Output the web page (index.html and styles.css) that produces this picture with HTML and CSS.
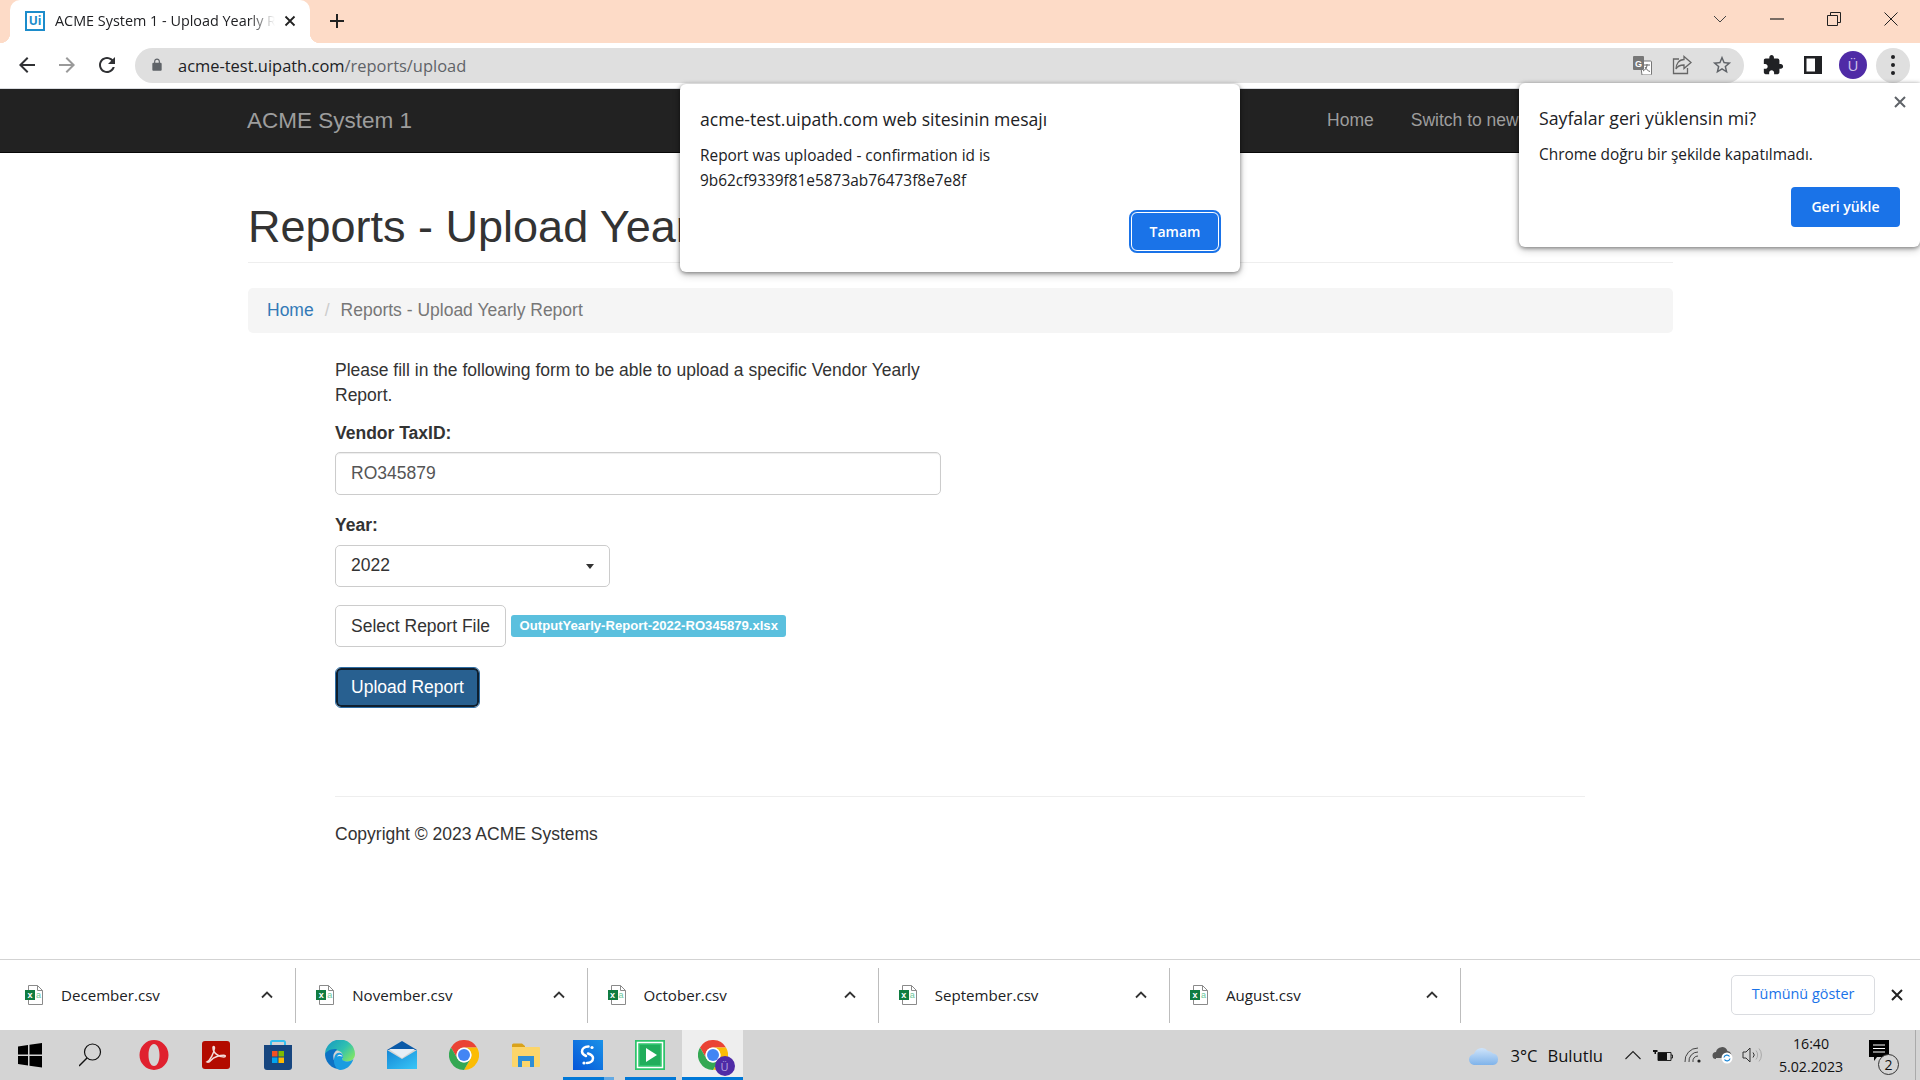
FILE: index.html
```html
<!DOCTYPE html>
<html>
<head>
  <meta charset="utf-8">
  <title>ACME System 1 - Upload Yearly Report</title>
  <link rel="stylesheet" href="styles.css">
</head>
<body>
  <svg class="defs" width="0" height="0">
    <symbol id="chrome" viewBox="0 0 30 30">
      <path d="M2 7.5A15 15 0 0 1 28 7.5H15A7.5 7.5 0 0 0 8.5 18.75Z" fill="#ea4335"/>
      <path d="M28 7.5A15 15 0 0 1 15 30L21.5 18.75A7.5 7.5 0 0 0 15 7.5Z" fill="#fbbc04"/>
      <path d="M15 30A15 15 0 0 1 2 7.5L8.5 18.75A7.5 7.5 0 0 0 21.5 18.75Z" fill="#34a853"/>
      <circle cx="15" cy="15" r="7.5" fill="#fff"/>
      <circle cx="15" cy="15" r="6" fill="#4285f4"/>
    </symbol>
    <symbol id="xl-page" viewBox="0 0 18 20">
      <path d="M3.5 .5h9l5 5v14h-14z" fill="#fff" stroke="#8a8a8a"/>
      <path d="M12.5 .5v5h5" fill="none" stroke="#8a8a8a"/>
      <rect x="0" y="5" width="10" height="10" fill="#107c41"/>
    </symbol>
    <symbol id="chev-up" viewBox="0 0 12 8">
      <path d="M1 6.5l5-5 5 5" stroke="#333" stroke-width="1.8" fill="none"/>
    </symbol>
  </svg>

  <div class="window">
    <div class="tabstrip">
      <div class="tab">
        <span class="favicon">Ui</span>
        <span class="tab-title">ACME System 1 - Upload Yearly Report</span>
        <svg class="tab-close" viewBox="0 0 12 12"><path d="M1.5 1.5l9 9M10.5 1.5l-9 9" stroke="#222" stroke-width="1.8" fill="none"/></svg>
      </div>
      <svg class="new-tab" viewBox="0 0 16 16"><path d="M8 1v14M1 8h14" stroke="#222" stroke-width="2" fill="none"/></svg>
      <div class="win-controls">
        <div class="win-btn"><svg width="14" height="8" viewBox="0 0 14 8"><path d="M1 1l6 6 6-6" stroke="#444" fill="none"/></svg></div>
        <div class="win-btn"><svg width="14" height="2" viewBox="0 0 14 2"><path d="M0 1h14" stroke="#222" stroke-width="1.2"/></svg></div>
        <div class="win-btn"><svg width="14" height="14" viewBox="0 0 14 14"><path d="M.5 3.5h10v10H.5zM3.5 3.5v-3h10v10h-3" stroke="#222" fill="none"/></svg></div>
        <div class="win-btn"><svg width="14" height="14" viewBox="0 0 14 14"><path d="M.5.5l13 13M13.5.5l-13 13" stroke="#222" fill="none"/></svg></div>
      </div>
    </div>

    <div class="toolbar">
      <div class="tool"><svg width="24" height="24" viewBox="0 0 24 24"><path d="M20 11H7.83l5.59-5.59L12 4l-8 8 8 8 1.41-1.41L7.83 13H20v-2z" fill="#303134"/></svg></div>
      <div class="tool"><svg width="24" height="24" viewBox="0 0 24 24"><path d="M4 11h12.17l-5.59-5.59L12 4l8 8-8 8-1.41-1.41L16.17 13H4v-2z" fill="#9a9a9a"/></svg></div>
      <div class="tool"><svg width="24" height="24" viewBox="0 0 24 24"><path d="M17.65 6.35C16.2 4.9 14.21 4 12 4c-4.42 0-7.99 3.58-7.99 8s3.57 8 7.99 8c3.73 0 6.84-2.55 7.73-6h-2.08c-.82 2.33-3.04 4-5.65 4-3.31 0-6-2.69-6-6s2.69-6 6-6c1.66 0 3.14.69 4.22 1.78L13 11h7V4l-2.35 2.35z" fill="#303134"/></svg></div>
      <div class="omnibox">
        <svg class="lock" width="14" height="16" viewBox="0 0 24 24"><path d="M18 8h-1V6c0-2.76-2.24-5-5-5S7 3.24 7 6v2H6c-1.1 0-2 .9-2 2v10c0 1.1.9 2 2 2h12c1.1 0 2-.9 2-2V10c0-1.1-.9-2-2-2zM9 8V6c0-1.66 1.34-3 3-3s3 1.34 3 3v2H9z" fill="#5f6368"/></svg>
        <span class="url"><b>acme-test.uipath.com</b>/reports/upload</span>
        <div class="omni-icons">
          <div class="tool"><svg width="20" height="20" viewBox="0 0 20 20"><path d="M8 6h10.500a1 1 0 0 1 1 1v12a1 1 0 0 1-1 1H10z" fill="#fff" stroke="#777"/><rect x="1" y="1" width="11" height="14" rx="1" fill="#777"/><text x="6.5" y="12" text-anchor="middle" class="tr-g">G</text><path d="M12 10h6M15 9v1c0 3-2 5-4 6M13 12c1 2 3 4 5 4.500" stroke="#666" fill="none"/></svg></div>
          <div class="tool"><svg width="20" height="20" viewBox="0 0 20 20"><path d="M7 4H1.500v14.500h14V13" stroke="#666" stroke-width="1.3" fill="none"/><path d="M12 1.500l7 6-7 6v-3.500c-4 0-6.500 1-8 4 0-5 3-9.500 8-9.500z" stroke="#666" stroke-width="1.3" fill="#e0e0e0"/></svg></div>
          <div class="tool"><svg width="22" height="22" viewBox="0 0 24 24"><path d="M22 9.24l-7.19-.62L12 2 9.19 8.63 2 9.24l5.46 4.73L5.82 21 12 17.27 18.18 21l-1.63-7.03L22 9.24zM12 15.4l-3.76 2.27 1-4.28-3.32-2.88 4.38-.38L12 6.1l1.71 4.04 4.38.38-3.32 2.88 1 4.28L12 15.4z" fill="#5f6368"/></svg></div>
        </div>
      </div>
      <div class="tool"><svg width="22" height="22" viewBox="0 0 24 24"><path d="M20.5 11H19V7c0-1.1-.9-2-2-2h-4V3.5C13 2.12 11.88 1 10.5 1S8 2.12 8 3.5V5H4c-1.1 0-1.99.9-1.99 2v3.8H3.5c1.49 0 2.7 1.21 2.7 2.7s-1.21 2.7-2.7 2.7H2V20c0 1.1.9 2 2 2h3.8v-1.5c0-1.49 1.21-2.7 2.7-2.7 1.49 0 2.7 1.21 2.7 2.7V22H17c1.1 0 2-.9 2-2v-4h1.5c1.38 0 2.5-1.12 2.5-2.5S21.88 11 20.5 11z" fill="#202124"/></svg></div>
      <div class="tool"><svg width="18" height="18" viewBox="0 0 18 18"><path d="M0 0h18v18H0zM2.500 2.500v13h8.500v-13z" fill="#202124" fill-rule="evenodd"/></svg></div>
      <div class="tool"><div class="avatar">Ü</div></div>
      <div class="tool"><div class="kebab"><i></i><i></i><i></i></div></div>
    </div>

    <main class="viewport">
      <nav class="navbar">
        <a class="brand">ACME System 1</a>
        <a class="nav-link nav-home">Home</a>
        <a class="nav-link">Switch to new</a>
      </nav>
      <div class="container">
        <h1 class="page-title">Reports - Upload Yearly Report</h1>
        <div class="breadcrumb">
          <a>Home</a><span class="crumb-sep">/</span><span class="crumb-active">Reports - Upload Yearly Report</span>
        </div>
        <div class="form-col">
          <p class="intro">Please fill in the following form to be able to upload a specific Vendor Yearly Report.</p>
          <label class="field-label">Vendor TaxID:</label>
          <div class="input">RO345879</div>
          <label class="field-label year-label">Year:</label>
          <div class="select">2022<span class="caret"></span></div>
          <div class="file-row">
            <button class="btn">Select Report File</button>
            <span class="badge">OutputYearly-Report-2022-RO345879.xlsx</span>
          </div>
          <button class="btn btn-upload">Upload Report</button>
        </div>
        <footer class="footer">Copyright © 2023 ACME Systems</footer>
      </div>
    </main>

    <div class="downloads">
      <div class="dl-item">
        <span class="dl-icon"><svg width="18" height="20"><use href="#xl-page"/></svg><b>x</b><i>a</i></span>
        <span class="dl-name">December.csv</span>
        <svg class="dl-chev"><use href="#chev-up"/></svg>
      </div>
      <div class="dl-item">
        <span class="dl-icon"><svg width="18" height="20"><use href="#xl-page"/></svg><b>x</b><i>a</i></span>
        <span class="dl-name">November.csv</span>
        <svg class="dl-chev"><use href="#chev-up"/></svg>
      </div>
      <div class="dl-item">
        <span class="dl-icon"><svg width="18" height="20"><use href="#xl-page"/></svg><b>x</b><i>a</i></span>
        <span class="dl-name">October.csv</span>
        <svg class="dl-chev"><use href="#chev-up"/></svg>
      </div>
      <div class="dl-item">
        <span class="dl-icon"><svg width="18" height="20"><use href="#xl-page"/></svg><b>x</b><i>a</i></span>
        <span class="dl-name">September.csv</span>
        <svg class="dl-chev"><use href="#chev-up"/></svg>
      </div>
      <div class="dl-item">
        <span class="dl-icon"><svg width="18" height="20"><use href="#xl-page"/></svg><b>x</b><i>a</i></span>
        <span class="dl-name">August.csv</span>
        <svg class="dl-chev"><use href="#chev-up"/></svg>
      </div>
      <button class="show-all">Tümünü göster</button>
      <svg class="dl-close" viewBox="0 0 12 12"><path d="M1 1l10 10M11 1L1 11" stroke="#222" stroke-width="2" fill="none"/></svg>
    </div>

    <div class="taskbar">
      <div class="slot"><svg width="26" height="26" viewBox="0 0 26 26"><path d="M1 4.500l10-1.500v9.500H1zM12.500 2.800L25 1v11.500H12.500zM1 14h10v9.500L1 22zM12.500 14H25v11.500l-12.500-1.800z" fill="#000"/></svg></div>
      <div class="slot"><svg width="26" height="26" viewBox="2 0 26 26"><circle cx="15.5" cy="10" r="8" fill="none" stroke="#111" stroke-width="1.2"/><path d="M10 16l-8 8" stroke="#111" stroke-width="1.4"/></svg></div>
      <div class="slot"><svg width="30" height="30" viewBox="0 0 30 30"><path d="M15 0a14.500 15 0 1 0 0 30a14.500 15 0 1 0 0-30zM15 4c3.500 0 5.500 5 5.500 11s-2 11-5.500 11s-5.500-5-5.500-11s2-11 5.500-11z" fill="#e0212f" fill-rule="evenodd"/></svg></div>
      <div class="slot"><svg width="28" height="28" viewBox="0 0 28 28"><rect width="28" height="28" rx="3" fill="#b30b00"/><path d="M5 21c3-1.500 7-9 7.500-14 .1-1.800-1.500-2-1.500-.3C11 12 17 16 22 16c1.800 0 1.800-1.800 0-1.800-4 0-10.500 1.800-13 5-1 1.200-3 2.500-4 1.800z" fill="none" stroke="#f4dcd9" stroke-width="1.5"/></svg></div>
      <div class="slot"><svg width="30" height="30" viewBox="0 0 30 30"><path d="M8 6V2.500A1.500 1.500 0 0 1 9.500 1h11A1.500 1.500 0 0 1 22 2.500V6" fill="none" stroke="#35c1f1" stroke-width="2"/><path d="M1 5h28v22a3 3 0 0 1-3 3H4a3 3 0 0 1-3-3z" fill="#17467f"/><rect x="9" y="11" width="5.5" height="5.5" fill="#f25022"/><rect x="15.5" y="11" width="5.5" height="5.5" fill="#7fba00"/><rect x="9" y="17.5" width="5.5" height="5.5" fill="#00a4ef"/><rect x="15.5" y="17.5" width="5.5" height="5.5" fill="#ffb900"/></svg></div>
      <div class="slot"><svg width="30" height="30" viewBox="0 0 30 30"><defs><linearGradient id="edgeTop" x1="0" y1="0" x2="1" y2=".7"><stop offset="0" stop-color="#1596c4"/><stop offset=".6" stop-color="#2fc0b0"/><stop offset="1" stop-color="#7be36a"/></linearGradient></defs><path d="M0 15A15 15 0 0 1 30 14c0 5-4 7.500-8 7.500-3 0-5-1-5-2 0-.6 1-1 1-2.800C18 13 15 10.500 11.500 10.500 5 10.500 0 14 0 15z" fill="url(#edgeTop)"/><path d="M0 15c0-3 5-6 10-6 3 0 2 1 0 3-3 3-2 10 3 14 2 1.500 5 2 7 2.300A15 15 0 0 1 0 15z" fill="#0d72c4"/><path d="M11 14c3-2.500 7-1 7 2.500 0 1 0 1.500-1 2.500 0 1.500 2.500 2.500 5 2.500 3 0 5-1 6.500-2.500C26 26 21 30 15 30c-6-1-8-11-4-16z" fill="#1a9ce0"/><path d="M12 16.500c1-2.500 5-2.500 5.500.3-2-1-4-1-5.500-.3z" fill="#e8f1f6"/></svg></div>
      <div class="slot"><svg width="30" height="30" viewBox="0 0 30 30"><defs><linearGradient id="mailBody" x1="0" y1="0" x2="1" y2="1"><stop offset="0" stop-color="#1487d6"/><stop offset="1" stop-color="#38c6f7"/></linearGradient></defs><path d="M0 10L15 1l15 9z" fill="#0a5aa8"/><path d="M0 10l15 9 15-9v19H0z" fill="url(#mailBody)"/><path d="M2 9h26l-13 9z" fill="#e7eef5"/></svg></div>
      <div class="slot"><svg width="30" height="30" viewBox="0 0 30 30"><use href="#chrome"/></svg></div>
      <div class="slot"><svg width="28" height="24" viewBox="0 0 28 24"><path d="M0 2a1.500 1.500 0 0 1 1.500-1.500H10L13 3v1H0z" fill="#d9a21b"/><path d="M0 4h27a1 1 0 0 1 1 1v18a1 1 0 0 1-1 1H1a1 1 0 0 1-1-1z" fill="#fcd56a"/><path d="M6 13h16v11h-4v-6h-8v6H6z" fill="#2f8ed6"/></svg></div>
      <div class="slot slot-open"><svg width="30" height="30" viewBox="0 0 30 30"><defs><linearGradient id="sTile" x1="0" y1="1" x2="1" y2="0"><stop offset="0" stop-color="#0555d8"/><stop offset="1" stop-color="#1a92e8"/></linearGradient></defs><rect width="30" height="30" fill="url(#sTile)"/><path d="M15.500 6.500c-4 0-6.500 2-6.500 5 0 2 1.500 3.500 4 4.500M15 13.500c3 1 5 2.500 5 4.500 0 3-2.500 5-6 5" fill="none" stroke="#fff" stroke-width="2.5" stroke-linecap="round"/><circle cx="19" cy="7.500" r="1.600" fill="#fff"/><circle cx="11" cy="23" r="1.600" fill="#fff"/></svg></div>
      <div class="slot slot-open slot-green"><svg width="30" height="30" viewBox="0 0 30 30"><rect width="30" height="30" fill="#2fc46c"/><rect x="2.5" y="2.500" width="25" height="25" fill="none" stroke="#fff" stroke-width="1.5"/><rect x="5" y="5" width="20" height="20" fill="#21ad5b"/><path d="M11 8l11 7-11 7z" fill="#fff"/></svg></div>
      <div class="slot slot-active">
        <div class="chrome-badged">
          <svg width="30" height="30" viewBox="0 0 30 30"><use href="#chrome"/></svg>
          <span class="profile-badge">Ü</span>
        </div>
      </div>
      <div class="tray">
        <svg class="tray-cloud" width="30" height="20" viewBox="0 0 30 20"><defs><linearGradient id="cloudFill" x1="0" y1="0" x2="0" y2="1"><stop offset="0" stop-color="#cfe4fa"/><stop offset="1" stop-color="#7fb3ea"/></linearGradient></defs><path d="M6 20a5.500 5.500 0 0 1-1-11A8 8 0 0 1 19 6a6.500 6.500 0 0 1 5 2.500A5.800 5.800 0 0 1 24 20z" fill="url(#cloudFill)"/></svg>
        <span class="weather"><span class="temp">3°C</span>Bulutlu</span>
        <div class="tray-icon"><svg width="16" height="10" viewBox="0 0 16 10"><path d="M.5 9L8 1.500 15.500 9" stroke="#222" fill="none" stroke-width="1.1"/></svg></div>
        <div class="tray-icon"><svg width="20" height="14" viewBox="0 0 20 14"><path d="M5 4.500h13v8H5zM18 7h1.500v3H18" fill="none" stroke="#222"/><rect x="5" y="5" width="9" height="7" fill="#111"/><path d="M1 0v2M3.500 0v2M0 2h4.500v2H3v2H1.500V4H0z" fill="#111"/></svg></div>
        <div class="tray-icon"><svg width="18" height="16" viewBox="0 0 18 16"><circle cx="15" cy="14" r="1.600" fill="#222"/><path d="M1 15A13 13 0 0 1 14 1M5 15a9 9 0 0 1 9-10M9 15a5 5 0 0 1 5-6" fill="none" stroke="#444"/></svg></div>
        <div class="tray-icon"><svg width="22" height="18" viewBox="0 0 22 18"><path d="M4 13a3.500 3.500 0 0 1 0-7A6 6 0 0 1 15.500 5 4 4 0 0 1 18 12H4z" fill="#555"/><circle cx="15" cy="12" r="5.500" fill="#fff"/><path d="M12 11.500a3 3 0 0 1 5.500-1M18 12.500a3 3 0 0 1-5.500 1" fill="none" stroke="#1a86d6" stroke-width="1.3"/></svg></div>
        <div class="tray-icon"><svg width="22" height="16" viewBox="0 0 22 16"><path d="M1 5h3l4-4v14l-4-4H1z" fill="none" stroke="#333"/><path d="M11 5.500a3.500 3.500 0 0 1 0 5" stroke="#333" fill="none"/><path d="M14 3.500a7 7 0 0 1 0 9M17 1.500a10 10 0 0 1 0 13" stroke="#a8a8a8" fill="none"/></svg></div>
        <div class="clock"><span>16:40</span><span>5.02.2023</span></div>
        <div class="notif">
          <svg width="20" height="22" viewBox="0 0 20 22"><path d="M0 0h20v17H8l-3 4v-4H0z" fill="#000"/><path d="M4 5h12M4 8.500h12M4 12h12" stroke="#fff"/></svg>
          <span class="notif-count">2</span>
        </div>
        <div class="desktop-edge"></div>
      </div>
    </div>

    <div class="dialog">
      <div class="dialog-title">acme-test.uipath.com web sitesinin mesajı</div>
      <div class="dialog-text">Report was uploaded - confirmation id is<br>9b62cf9339f81e5873ab76473f8e7e8f</div>
      <div class="dialog-actions"><button class="dialog-btn">Tamam</button></div>
    </div>

    <div class="bubble">
      <svg class="bubble-close" viewBox="0 0 12 12"><path d="M1 1l10 10M11 1L1 11" stroke="#5f6368" stroke-width="2" fill="none"/></svg>
      <div class="bubble-title">Sayfalar geri yüklensin mi?</div>
      <div class="bubble-text">Chrome doğru bir şekilde kapatılmadı.</div>
      <div class="bubble-actions"><button class="bubble-btn">Geri yükle</button></div>
    </div>
  </div>
</body>
</html>
```

FILE: styles.css
```css
html, body {
  margin: 0;
  padding: 0;
  height: 100%;
  overflow: hidden;
}
.defs {
  position: absolute;
}
.window {
  position: relative;
  display: flex;
  flex-direction: column;
  height: 100vh;
  font-family: "Open Sans", "Noto Sans", sans-serif;
  color: #202124;
  background: #fff;
}

/* browser chrome */
.tabstrip {
  display: flex;
  align-items: center;
  flex: none;
  height: 43px;
  background: #fddbc7;
}
.tab {
  position: relative;
  display: flex;
  align-items: center;
  width: 300px;
  height: 43px;
  padding-bottom: 2px;
  box-sizing: border-box;
  margin-left: 10px;
  background: #fff;
  border-radius: 10px 10px 0 0;
}
.tab::before,
.tab::after {
  content: "";
  position: absolute;
  bottom: 0;
  width: 10px;
  height: 10px;
}
.tab::before {
  left: -10px;
  background: radial-gradient(circle at 0 0, transparent 10px, #fff 10.5px);
}
.tab::after {
  right: -10px;
  background: radial-gradient(circle at 100% 0, transparent 10px, #fff 10.5px);
}
.favicon {
  flex: none;
  box-sizing: border-box;
  width: 20px;
  height: 20px;
  margin-left: 15px;
  border: 2px solid #1c8ccb;
  font: 700 12px/16px "Open Sans", sans-serif;
  text-align: center;
  color: #1c8ccb;
}
.tab-title {
  flex: 1;
  margin-left: 10px;
  overflow: hidden;
  white-space: nowrap;
  font-size: 14.4px;
  -webkit-mask-image: linear-gradient(to right, #000 88%, transparent 100%);
  mask-image: linear-gradient(to right, #000 88%, transparent 100%);
}
.tab-close {
  flex: none;
  width: 12px;
  height: 12px;
  margin: 0 14px 0 9px;
}
.new-tab {
  width: 16px;
  height: 16px;
  margin: 0 0 2px 19px;
}
.win-controls {
  display: flex;
  align-self: flex-start;
  margin: 0 1px 0 auto;
}
.win-btn {
  display: flex;
  align-items: center;
  justify-content: center;
  width: 57px;
  height: 38px;
}
.toolbar {
  display: flex;
  align-items: center;
  flex: none;
  box-sizing: border-box;
  height: 46px;
  padding: 0 0 1px 7px;
  background: #fff;
  border-bottom: 1px solid #dadce0;
}
.tool {
  display: flex;
  align-items: center;
  justify-content: center;
  flex: none;
  width: 40px;
  height: 35px;
}
.omnibox {
  display: flex;
  align-items: center;
  flex: none;
  width: 1609px;
  height: 35px;
  margin: 0 9px 0 8px;
  background: #dfdfdf;
  border-radius: 18px;
  box-sizing: border-box;
  padding-left: 15px;
}
.lock {
  flex: none;
}
.url {
  margin-left: 14px;
  font-size: 16.45px;
  color: #5f6368;
  white-space: nowrap;
}
.url b {
  font-weight: 400;
  color: #202124;
}
.omni-icons {
  display: flex;
  margin-left: auto;
  padding-right: 2px;
}
.tr-g {
  font: bold 9px "Liberation Sans", sans-serif;
  fill: #fff;
}
.avatar {
  display: flex;
  align-items: center;
  justify-content: center;
  width: 28px;
  height: 28px;
  border-radius: 50%;
  background: #4f2ba6;
  color: #cfc4ea;
  font-size: 15px;
}
.kebab {
  display: flex;
  flex-direction: column;
  align-items: center;
  justify-content: center;
  gap: 4px;
  width: 34px;
  height: 35px;
  border-radius: 50%;
  background: #dfdfdf;
}
.kebab i {
  width: 4px;
  height: 4px;
  border-radius: 50%;
  background: #202124;
}

/* page */
.viewport {
  flex: 1;
  min-height: 0;
  overflow: hidden;
  font-family: "Liberation Sans", Arial, sans-serif;
  font-size: 17.5px;
  line-height: 25px;
  color: #333;
}
.navbar {
  display: flex;
  align-items: center;
  box-sizing: border-box;
  height: 64px;
  padding-left: 247px;
  background: #222;
  border-bottom: 1px solid #080808;
  color: #9d9d9d;
  white-space: nowrap;
}
.brand {
  font-size: 22.5px;
}
.nav-home {
  margin-left: 915px;
}
.nav-link {
  margin-right: 37px;
}
.container {
  width: 1425px;
  margin-left: 248px;
}
.page-title {
  margin: 49px 0 0;
  padding-bottom: 10px;
  font-size: 45px;
  font-weight: 500;
  line-height: 50px;
  border-bottom: 1px solid #eee;
  white-space: nowrap;
}
.breadcrumb {
  height: 45px;
  margin-top: 25px;
  padding: 10px 19px;
  box-sizing: border-box;
  background: #f5f5f5;
  border-radius: 5px;
}
.breadcrumb a {
  color: #337ab7;
}
.crumb-sep {
  padding: 0 11px;
  color: #ccc;
}
.crumb-active {
  color: #777;
}
.form-col {
  width: 606px;
  margin-left: 87px;
  padding-top: 25px;
}
.intro {
  margin: 0 0 13px;
}
.field-label {
  display: block;
  margin-bottom: 6px;
  font-weight: 700;
}
.year-label {
  margin-top: 18px;
  margin-bottom: 7px;
}
.input,
.select {
  box-sizing: border-box;
  height: 43px;
  padding: 8px 15px;
  background: #fff;
  border: 1px solid #ccc;
  border-radius: 5px;
  box-shadow: inset 0 1px 1px rgba(0, 0, 0, .075);
  color: #555;
}
.select {
  position: relative;
  width: 275px;
  height: 42px;
  padding-top: 7px;
  color: #333;
  box-shadow: none;
}
.caret {
  position: absolute;
  right: 15px;
  top: 18px;
  border-top: 5px solid #333;
  border-left: 4.5px solid transparent;
  border-right: 4.5px solid transparent;
}
.file-row {
  display: flex;
  align-items: center;
  margin-top: 18px;
}
.btn {
  box-sizing: border-box;
  height: 42px;
  padding: 0 15px;
  font: inherit;
  color: #333;
  background: #fff;
  border: 1px solid #ccc;
  border-radius: 5px;
}
.badge {
  margin-left: 5px;
  padding: 0 8.5px;
  height: 22px;
  line-height: 22px;
  font-size: 13.1px;
  font-weight: 700;
  color: #fff;
  background: #5bc0de;
  border-radius: 3px;
  white-space: nowrap;
}
.btn-upload {
  display: block;
  width: 143px;
  height: 39px;
  margin: 21px 0 0 1px;
  padding: 0;
  color: #fff;
  background: #286090;
  border: 2px solid #0f1f2e;
  outline: 1px solid #2e6da4;
}
.footer {
  margin: 89px 88px 0 87px;
  padding-top: 25px;
  border-top: 1px solid #eee;
}

/* downloads shelf */
.downloads {
  display: flex;
  align-items: center;
  flex: none;
  box-sizing: border-box;
  height: 71px;
  padding-left: 5px;
  background: #fff;
  border-top: 1px solid #d3d3d3;
}
.dl-item {
  display: flex;
  align-items: center;
  flex: none;
  box-sizing: border-box;
  width: 291.25px;
  height: 55px;
  padding: 0 22px 0 20px;
  border-right: 1px solid #bdbdbd;
}
.dl-icon {
  position: relative;
  flex: none;
  width: 18px;
  height: 20px;
}
.dl-icon b,
.dl-icon i {
  position: absolute;
  top: 4px;
  font: bold 9px/12px "Liberation Sans", sans-serif;
  text-align: center;
}
.dl-icon b {
  left: 0;
  width: 10px;
  color: #fff;
}
.dl-icon i {
  left: 10px;
  width: 7px;
  font-weight: 400;
  color: #6ac79b;
}
.dl-name {
  flex: 1;
  margin-left: 18px;
  font-size: 15.1px;
}
.dl-chev {
  flex: none;
  width: 12px;
  height: 8px;
}
.show-all {
  box-sizing: border-box;
  width: 144px;
  height: 40px;
  margin-left: auto;
  padding: 0 0 3px;
  font: 500 14.4px "Open Sans", sans-serif;
  color: #1a73e8;
  background: #fff;
  border: 1px solid #dadce0;
  border-radius: 5px;
}
.dl-close {
  flex: none;
  width: 12px;
  height: 12px;
  margin: 0 17px 0 16px;
}

/* taskbar */
.taskbar {
  display: flex;
  flex: none;
  height: 50px;
  background: #d4d4d4;
}
.slot {
  display: flex;
  align-items: center;
  justify-content: center;
  flex: none;
  box-sizing: border-box;
  width: 62px;
  height: 50px;
}
.slot:first-child {
  margin-left: -1px;
}
.slot-open {
  position: relative;
}
.slot-open::after {
  content: "";
  position: absolute;
  left: 6px;
  bottom: 0;
  width: 41px;
  height: 3px;
  background: #0078d7;
  box-shadow: 10px 0 0 #63a9e3;
}
.slot-green::after {
  width: 51px;
  box-shadow: none;
}
.slot-active {
  width: 61px;
  margin-left: 1px;
  background: #eee;
  box-shadow: inset 0 -3px 0 #0078d7;
}
.chrome-badged {
  position: relative;
  width: 30px;
  height: 30px;
}
.profile-badge {
  position: absolute;
  right: -7px;
  bottom: -6px;
  display: flex;
  align-items: center;
  justify-content: center;
  width: 20px;
  height: 20px;
  border-radius: 50%;
  background: #4f2ba6;
  color: #b7a8e0;
  font-size: 11px;
}
.tray {
  display: flex;
  align-items: center;
  margin-left: auto;
  color: #111;
}
.weather {
  margin: 0 15px 0 11px;
  font-size: 16.6px;
  white-space: nowrap;
}
.temp {
  margin-right: 10px;
}
.tray-icon {
  display: flex;
  align-items: center;
  justify-content: center;
  width: 30px;
  height: 50px;
}
.clock {
  display: flex;
  flex-direction: column;
  align-items: center;
  width: 86px;
  font-size: 14.2px;
  line-height: 23px;
}
.notif {
  position: relative;
  display: flex;
  align-items: center;
  justify-content: center;
  width: 50px;
  height: 50px;
  padding-bottom: 8px;
  box-sizing: border-box;
}
.notif-count {
  position: absolute;
  left: 24px;
  top: 24px;
  display: flex;
  align-items: center;
  justify-content: center;
  width: 19px;
  height: 19px;
  border: 1px solid #333;
  border-radius: 50%;
  background: #d4d4d4;
  font-size: 14px;
}
.desktop-edge {
  width: 1px;
  height: 50px;
  margin: 0 4px 0 11px;
  background: #aaa;
}

/* dialogs over the page */
.dialog {
  position: absolute;
  left: 680px;
  top: 84px;
  box-sizing: border-box;
  width: 560px;
  height: 188px;
  padding: 21px 20px 0;
  background: #fff;
  border-radius: 6px;
  box-shadow: 0 1px 4px rgba(0, 0, 0, .45), 0 3px 8px rgba(0, 0, 0, .2);
}
.dialog-title {
  font-size: 17.6px;
  line-height: 28px;
}
.dialog-text {
  margin-top: 10px;
  font-size: 15.4px;
  line-height: 25px;
}
.dialog-actions {
  position: absolute;
  right: 21px;
  bottom: 21px;
}
.dialog-btn {
  display: block;
  box-sizing: border-box;
  width: 88px;
  height: 39px;
  padding: 0;
  font: 600 14px "Open Sans", sans-serif;
  color: #fff;
  background: #1a73e8;
  border: 1px solid #fff;
  outline: 2px solid #1a73e8;
  border-radius: 6px;
}
.bubble {
  position: absolute;
  left: 1519px;
  top: 83px;
  box-sizing: border-box;
  width: 401px;
  height: 164px;
  padding: 21px 20px 0;
  background: #fff;
  border-radius: 6px 0 6px 6px;
  box-shadow: 0 1px 4px rgba(0, 0, 0, .45), 0 3px 8px rgba(0, 0, 0, .2);
}
.bubble-close {
  position: absolute;
  right: 14px;
  top: 13px;
  width: 12px;
  height: 12px;
}
.bubble-title {
  font-size: 17.7px;
  line-height: 28px;
}
.bubble-text {
  margin-top: 12px;
  font-size: 15.4px;
  line-height: 22px;
}
.bubble-actions {
  position: absolute;
  right: 20px;
  bottom: 20px;
}
.bubble-btn {
  display: block;
  width: 109px;
  height: 40px;
  padding: 0 0 2px;
  font: 600 14px "Open Sans", sans-serif;
  color: #fff;
  background: #1a73e8;
  border: 0;
  border-radius: 4px;
}
```
